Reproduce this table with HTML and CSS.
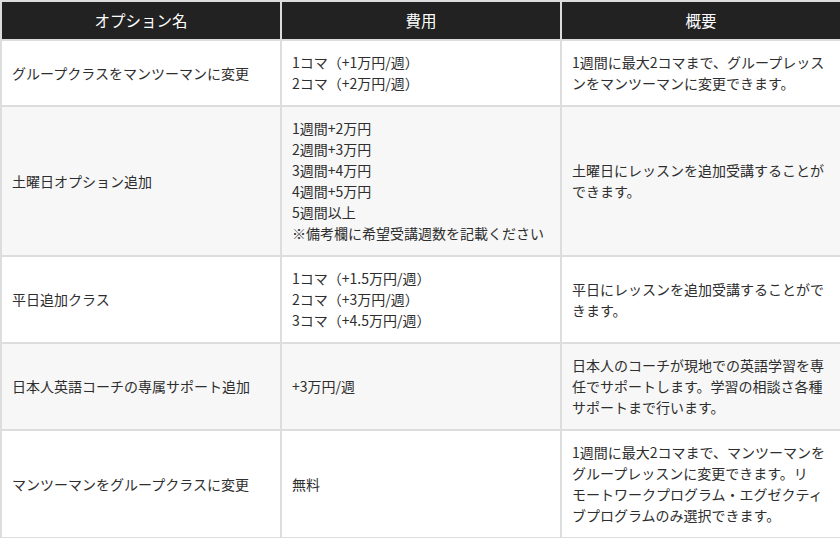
FILE: index.html
```html
<!DOCTYPE html>
<html lang="ja">
<head>
<meta charset="utf-8">
<title>オプション</title>
<link rel="stylesheet" href="styles.css">
</head>
<body>
<table class="options">
  <colgroup><col class="c1"><col class="c2"><col class="c3"></colgroup>
  <thead>
    <tr><th>オプション名</th><th>費用</th><th>概要</th></tr>
  </thead>
  <tbody>
    <tr>
      <td>グループクラスをマンツーマンに変更</td>
      <td>1コマ（+1万円/週）<br>2コマ（+2万円/週）</td>
      <td>1週間に最大2コマまで、グループレッスンをマンツーマンに変更できます。</td>
    </tr>
    <tr>
      <td>土曜日オプション追加</td>
      <td>1週間+2万円<br>2週間+3万円<br>3週間+4万円<br>4週間+5万円<br>5週間以上<br>※備考欄に希望受講週数を記載ください</td>
      <td>土曜日にレッスンを追加受講することができます。</td>
    </tr>
    <tr>
      <td>平日追加クラス</td>
      <td>1コマ（+1.5万円/週）<br>2コマ（+3万円/週）<br>3コマ（+4.5万円/週）</td>
      <td>平日にレッスンを追加受講することができます。</td>
    </tr>
    <tr>
      <td>日本人英語コーチの専属サポート追加</td>
      <td>+3万円/週</td>
      <td>日本人のコーチが現地での英語学習を専任でサポートします。学習の相談さ各種サポートまで行います。</td>
    </tr>
    <tr>
      <td>マンツーマンをグループクラスに変更</td>
      <td>無料</td>
      <td>1週間に最大2コマまで、マンツーマンをグループレッスンに変更できます。リモートワークプログラム・エグゼクティブプログラムのみ選択できます。</td>
    </tr>
  </tbody>
</table>
</body>
</html>
```

FILE: styles.css
```css
html, body {
  margin: 0;
  padding: 0;
  background: #ffffff;
}
body {
  font-family: "Noto Sans CJK JP", "Noto Sans", sans-serif;
  color: #2e2e2e;
}
.options {
  width: 840px;
  border-collapse: collapse;
  table-layout: fixed;
}
.options col { width: 280px; }
.options th,
.options td {
  border: 2px solid #dddddd;
}
.options th {
  background: #222222;
  color: #ffffff;
  font-weight: 400;
  font-size: 15.5px;
  line-height: 23px;
  padding: 7px 10px;
  text-align: center;
}
.options td {
  font-size: 14px;
  line-height: 21px;
  padding: 11px 10px;
  text-align: left;
  vertical-align: middle;
  background: #ffffff;
  line-break: strict;
}
.options tbody tr:nth-child(even) td {
  background: #f7f7f7;
}
```
